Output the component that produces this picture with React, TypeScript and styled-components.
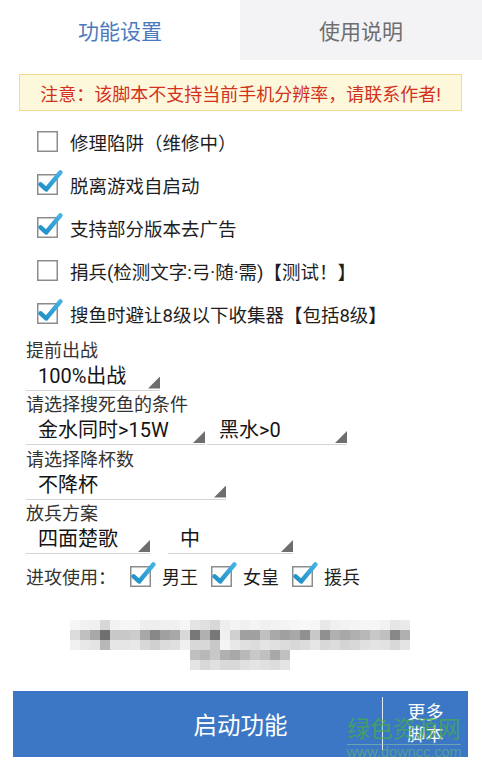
import React from "react";
import styled, { createGlobalStyle } from "styled-components";

const GlobalStyle = createGlobalStyle`
  html, body {
    margin: 0;
    padding: 0;
    background: #ffffff;
  }
  body {
    font-family: Roboto, "Noto Sans CJK SC", sans-serif;
  }
`;

// grey levels of the blurred strip, 10px cells
const mosaicTop = [
  [0xf6, 0xf2, 0xf0, 0xd8, 0xf2, 0xf6, 0xf6, 0xee, 0xee, 0xf0, 0xf0, 0xf6, 0xe4, 0xe0, 0xd8, 0xee, 0xf4, 0xf0, 0xf4, 0xf0, 0xf2, 0xf4, 0xf6, 0xf8, 0xf6, 0xe8, 0xf0, 0xf2, 0xf4, 0xf6, 0xf6, 0xf2, 0xe6, 0xea],
  [0xdc, 0xc0, 0xa8, 0x70, 0xc8, 0xc8, 0xcc, 0xa8, 0x88, 0xa0, 0xa8, 0xd8, 0x78, 0xb0, 0x78, 0xf0, 0xd0, 0xa0, 0xa0, 0xc0, 0xa8, 0xa0, 0xa8, 0x90, 0xc8, 0x90, 0xb0, 0xa8, 0xb0, 0xb8, 0xc8, 0xc0, 0x88, 0xb0],
  [0xf0, 0xe8, 0xe4, 0xb8, 0xe6, 0xe6, 0xe8, 0xd8, 0xd0, 0xdc, 0xe0, 0xf0, 0xd8, 0xd8, 0xc8, 0xf4, 0xe8, 0xe0, 0xdc, 0xe4, 0xe0, 0xdc, 0xd8, 0xdc, 0xe6, 0xd8, 0xdc, 0xd4, 0xd8, 0xe0, 0xe4, 0xe2, 0xd8, 0xe4],
];
const mosaicBottom = [
  [0xc0, 0xb8, 0xc8, 0xb0, 0xa8, 0xb8, 0xc8, 0xc0, 0xa8, 0xc0],
  [0xe4, 0xd8, 0xe0, 0xd8, 0xd8, 0xe0, 0xe4, 0xe0, 0xdc, 0xe4],
];

const grey = (v: number) => `rgb(${v},${v},${v})`;

const Check = ({ on }: { on: boolean }) => (
  <CheckSvg width="21" height="21" viewBox="0 0 21 21">
    <defs>
      <linearGradient id="tick" x1="0" y1="1" x2="1" y2="0">
        <stop offset="0" stopColor="#1f8fc6" />
        <stop offset="1" stopColor="#45b2e2" />
      </linearGradient>
    </defs>
    <rect x="0.75" y="0.75" width="19.5" height="19.5" fill="#fff" stroke="#8c8c8c" strokeWidth="1.5" />
    {on && (
      <path
        d="M3.6 10.4 L9.2 15.4 L23.4 -1.6"
        fill="none"
        stroke="url(#tick)"
        strokeWidth="4.6"
        strokeLinecap="round"
        strokeLinejoin="round"
      />
    )}
  </CheckSvg>
);

const options = [
  { text: "修理陷阱（维修中）", on: false },
  { text: "脱离游戏自启动", on: true },
  { text: "支持部分版本去广告", on: true },
  { text: "捐兵(检测文字:弓·随·需)【测试！】", on: false },
  { text: "搜鱼时避让8级以下收集器【包括8级】", on: true },
];

export default function App() {
  return (
    <Page>
      <GlobalStyle />
      <Tabs>
        <Tab $active>功能设置</Tab>
        <Tab $active={false}>使用说明</Tab>
      </Tabs>

      <Notice>注意：该脚本不支持当前手机分辨率，请联系作者!</Notice>

      <CheckList>
        {options.map((o) => (
          <OptionRow key={o.text}>
            <Check on={o.on} />
            <span>{o.text}</span>
          </OptionRow>
        ))}
      </CheckList>

      <Settings>
        <FieldLabel>提前出战</FieldLabel>
        <SpinnerRow $gap={0}>
          <Spinner $width={134}>100%出战</Spinner>
        </SpinnerRow>

        <FieldLabel>请选择搜死鱼的条件</FieldLabel>
        <SpinnerRow $gap={2}>
          <Spinner $width={179}>金水同时&gt;15W</Spinner>
          <Spinner $width={140}>黑水&gt;0</Spinner>
        </SpinnerRow>

        <FieldLabel>请选择降杯数</FieldLabel>
        <SpinnerRow $gap={0}>
          <Spinner $width={200}>不降杯</Spinner>
        </SpinnerRow>

        <FieldLabel>放兵方案</FieldLabel>
        <SpinnerRow $gap={18}>
          <Spinner $width={124}>四面楚歌</Spinner>
          <Spinner $width={125}>中</Spinner>
        </SpinnerRow>

        <AttackRow>
          <AttackLabel>进攻使用：</AttackLabel>
          {["男王", "女皇", "援兵"].map((n) => (
            <AttackItem key={n}>
              <Check on />
              <span>{n}</span>
            </AttackItem>
          ))}
        </AttackRow>
      </Settings>

      <Mosaic width="340" height="50" viewBox="0 0 340 50">
        {mosaicTop.map((row, r) =>
          row.map((v, c) => (
            <rect key={`t${r}-${c}`} x={c * 10} y={r * 10} width="10" height="10" fill={grey(v)} />
          ))
        )}
        {mosaicBottom.map((row, r) =>
          row.map((v, c) => (
            <rect key={`b${r}-${c}`} x={120 + c * 10} y={30 + r * 10} width="10" height="10" fill={grey(v)} />
          ))
        )}
      </Mosaic>

      <StartBar>
        <StartMain>启动功能</StartMain>
        <Divider />
        <MoreScripts>
          更多
          <br />
          脚本
        </MoreScripts>
      </StartBar>

      <Watermark>
        <WatermarkName>绿色资源网</WatermarkName>
        <WatermarkUrl>www.downcc.com</WatermarkUrl>
      </Watermark>
    </Page>
  );
}

const Page = styled.div`
  position: relative;
  width: 482px;
  height: 770px;
  overflow: hidden;
  display: flex;
  flex-direction: column;
  background: #ffffff;
`;

const Tabs = styled.div`
  display: grid;
  grid-template-columns: 240px 242px;
  height: 60px;
`;

const Tab = styled.div<{ $active: boolean }>`
  display: flex;
  align-items: center;
  justify-content: center;
  font-size: 21px;
  color: ${(p) => (p.$active ? "#4a7bbd" : "#6e6e6e")};
  background: ${(p) => (p.$active ? "#ffffff" : "#f3f3f5")};
`;

const Notice = styled.div`
  margin: 14px 20px 0 19px;
  height: 37px;
  box-sizing: border-box;
  border: 1px solid #f1db8e;
  background: #fdf8db;
  color: #d3311d;
  font-size: 18px;
  display: flex;
  align-items: center;
  justify-content: center;
`;

const CheckList = styled.div`
  margin-top: 9px;
  padding-left: 37px;
  display: flex;
  flex-direction: column;
`;

const OptionRow = styled.div`
  height: 43px;
  display: flex;
  align-items: center;
  gap: 12px;
  font-size: 18.5px;
  color: #1e1e1e;
`;

const CheckSvg = styled.svg`
  flex: none;
  overflow: visible;
`;

const Settings = styled.div`
  margin-top: 1px;
  padding-left: 26px;
  display: flex;
  flex-direction: column;
`;

const FieldLabel = styled.div`
  height: 25px;
  display: flex;
  align-items: center;
  font-size: 18px;
  color: #333333;
`;

const SpinnerRow = styled.div<{ $gap: number }>`
  display: flex;
  gap: ${(p) => p.$gap}px;
`;

const Spinner = styled.div<{ $width: number }>`
  position: relative;
  width: ${(p) => p.$width}px;
  height: 29.5px;
  box-sizing: border-box;
  padding: 0 0 2px 12px;
  border-bottom: 1.5px solid #d4d4d4;
  display: flex;
  align-items: center;
  font-size: 20px;
  color: #141414;

  &::after {
    content: "";
    position: absolute;
    right: 0;
    bottom: 1px;
    width: 12px;
    height: 12px;
    background: #6e6e6e;
    clip-path: polygon(100% 0, 100% 100%, 0 100%);
  }
`;

const AttackRow = styled.div`
  height: 44px;
  display: flex;
  align-items: center;
  font-size: 18px;
  color: #1e1e1e;
`;

const AttackLabel = styled.span`
  color: #333333;
  margin-right: 14px;
`;

const AttackItem = styled.div`
  display: flex;
  align-items: center;
  gap: 11px;
  margin-right: 13px;
`;

const Mosaic = styled.svg`
  display: block;
  margin: 22px 0 0 70px;
`;

const StartBar = styled.div`
  margin: 21px 0 0 13px;
  width: 455px;
  height: 66px;
  background: #3b77c5;
  display: flex;
  align-items: stretch;
  color: #ffffff;
`;

const StartMain = styled.div`
  flex: 1;
  padding-left: 86px;
  display: flex;
  align-items: center;
  justify-content: center;
  font-size: 23.5px;
`;

const Divider = styled.div`
  width: 1px;
  margin: 6px 0 7px;
  background: rgba(255, 255, 255, 0.85);
`;

const MoreScripts = styled.div`
  width: 85px;
  display: flex;
  flex-direction: column;
  align-items: center;
  justify-content: center;
  font-size: 18px;
  line-height: 22px;
  text-align: center;
`;

const Watermark = styled.div`
  position: absolute;
  left: 347px;
  top: 716px;
  width: 114px;
  display: flex;
  flex-direction: column;
  align-items: center;
  pointer-events: none;
`;

const WatermarkName = styled.div`
  font-size: 22.6px;
  line-height: 28px;
  color: rgba(70, 175, 70, 0.72);
  width: 100%;
  text-align: center;
  border-bottom: 1px solid rgba(150, 210, 150, 0.5);
`;

const WatermarkUrl = styled.div`
  font-family: "Liberation Sans", Arial, sans-serif;
  font-size: 14.5px;
  line-height: 15px;
  color: rgba(110, 190, 110, 0.55);
`;
